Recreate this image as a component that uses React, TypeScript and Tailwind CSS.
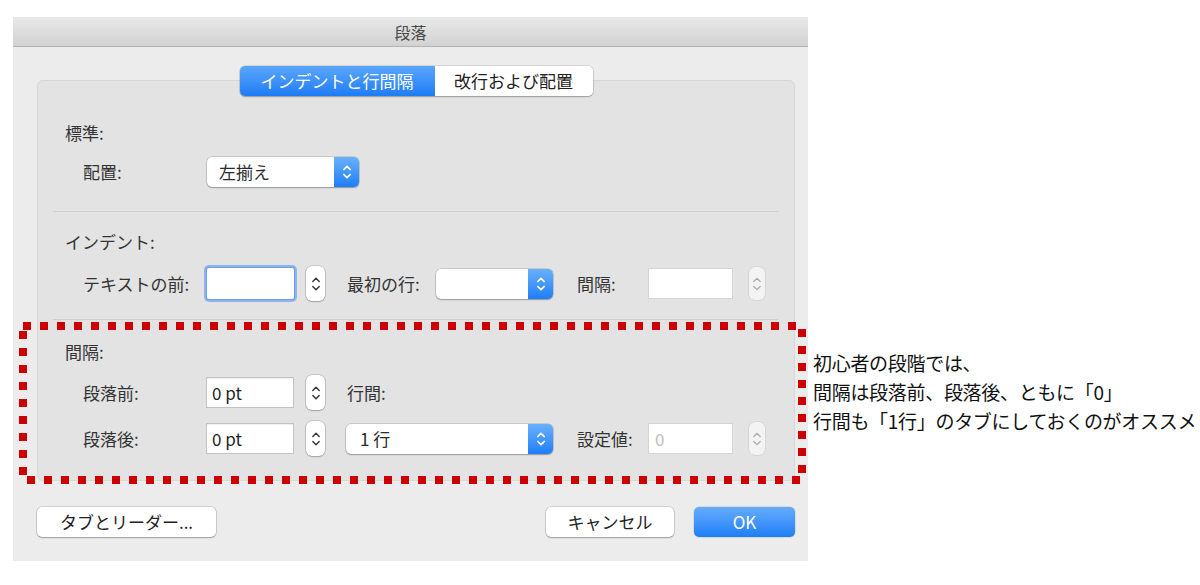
import React from "react";

function Chevrons({ color, w = 10, h = 16, sw = 1.6 }: { color: string; w?: number; h?: number; sw?: number }) {
  const cx = w / 2;
  return (
    <svg width={w} height={h} viewBox={`0 0 ${w} ${h}`} fill="none">
      <path d={`M${cx - 3.2} ${h / 2 - 2.5} L${cx} ${h / 2 - 5.7} L${cx + 3.2} ${h / 2 - 2.5}`} stroke={color} strokeWidth={sw} strokeLinecap="round" strokeLinejoin="round" />
      <path d={`M${cx - 3.2} ${h / 2 + 2.5} L${cx} ${h / 2 + 5.7} L${cx + 3.2} ${h / 2 + 2.5}`} stroke={color} strokeWidth={sw} strokeLinecap="round" strokeLinejoin="round" />
    </svg>
  );
}

function Select({ className, text, textClass }: { className: string; text: string; textClass: string }) {
  return (
    <div className={`h-[30px] flex rounded-[5px] bg-white shadow-[0_0_0_0.5px_rgba(0,0,0,0.22),0_1px_1.5px_rgba(0,0,0,0.25)] overflow-hidden ${className}`}>
      <div className={`flex-1 flex items-center text-[17px] text-[#2a2a2a] ${textClass}`}>{text}</div>
      <div className="w-[25px] flex items-center justify-center bg-linear-to-b from-[#68b0fb] to-[#1a7ef8]">
        <Chevrons color="#ffffff" w={12} h={20} sw={1.7} />
      </div>
    </div>
  );
}

function Stepper({ disabled }: { disabled?: boolean }) {
  if (disabled) {
    return (
      <div className="w-[16px] h-[33px] rounded-[6px] bg-[#f3f3f3] shadow-[0_0_0_0.5px_rgba(0,0,0,0.12)] flex items-center justify-center">
        <Chevrons color="#a8a8a8" w={10} h={24} sw={1.2} />
      </div>
    );
  }
  return (
    <div className="w-[19px] h-[35px] rounded-[6px] bg-white shadow-[0_0_0_0.5px_rgba(0,0,0,0.25),0_1px_1.5px_rgba(0,0,0,0.2)] flex items-center justify-center">
      <Chevrons color="#333333" w={10} h={24} sw={1.4} />
    </div>
  );
}

function Input({ className, text, focused, disabled, placeholder }: { className: string; text?: string; focused?: boolean; disabled?: boolean; placeholder?: string }) {
  const base = "h-[31px] bg-white flex items-center text-[17px] ";
  const look = focused
    ? "shadow-[0_0_0_1px_#6f9ee8,0_0_0_3px_#8db4ee] rounded-[2px]"
    : disabled
    ? "border border-[#d4d4d4]"
    : "border border-[#c3c3c3] shadow-[inset_0_1px_0_rgba(0,0,0,0.06)]";
  return (
    <div className={`${base}${look} ${className}`}>
      {text && <span className="pl-[5px] text-[#1f1f1f]">{text}</span>}
      {placeholder && <span className="pl-[6px] text-[#bdbdbd]">{placeholder}</span>}
    </div>
  );
}

function Label({ className, children }: { className: string; children: React.ReactNode }) {
  return <div className={`text-[17px] text-[#333] whitespace-nowrap ${className}`}>{children}</div>;
}

export default function App() {
  return (
    <div className="w-[1200px] h-[585px] bg-white relative flex items-start overflow-hidden font-['Noto_Sans_CJK_JP','Noto_Sans',sans-serif]">
      {/* Dialog */}
      <div className="ml-[13px] mt-[17px] w-[795px] h-[544px] bg-[#ececec] flex flex-col">
        <div className="h-[30px] flex items-center justify-center bg-linear-to-b from-[#e9e9e9] to-[#d2d2d2] border-b border-[#b3b3b3] text-[16px] text-[#4a4a4a]">
          段落
        </div>
        <div className="flex-1 flex flex-col pl-[24px] pr-[13px]">
          {/* Tabs */}
          <div className="mt-[19px] flex justify-center relative z-10">
            <div className="flex h-[30px] rounded-[5px] overflow-hidden shadow-[0_0_0_0.5px_rgba(0,0,0,0.2),0_1px_1.5px_rgba(0,0,0,0.25)]">
              <div className="w-[195px] flex items-center justify-center bg-linear-to-b from-[#5aa6fb] to-[#1b7cf6] text-white text-[17px]">
                インデントと行間隔
              </div>
              <div className="w-[158px] flex items-center justify-center bg-white text-[#222] text-[17px]">
                改行および配置
              </div>
            </div>
          </div>
          {/* Panel */}
          <div className="-mt-[16px] h-[401px] bg-[#e3e3e3] border border-[#d7d7d7] rounded-[6px] flex flex-col">
            <Label className="pt-[42px] pl-[27px] h-[62px] flex items-end leading-[20px]">標準:</Label>
            <div className="mt-[14px] h-[30px] flex items-center pl-[45px]">
              <Label className="w-[124px]">配置:</Label>
              <Select className="w-[152px]" text="左揃え" textClass="pl-[12px]" />
            </div>
            <div className="mt-[24px] h-px bg-[#cfcfcf] ml-[15px] mr-[16px]" />
            <Label className="mt-[20px] h-[20px] pl-[27px] leading-[20px]">インデント:</Label>
            <div className="mt-[13px] h-[37px] flex items-center pl-[45px]">
              <Label className="w-[124px]">テキストの前:</Label>
              <Input className="w-[87px]" focused />
              <div className="ml-[12px]"><Stepper /></div>
              <Label className="ml-[22px] w-[89px]">最初の行:</Label>
              <Select className="w-[117px]" text="" textClass="" />
              <Label className="ml-[24px] w-[71px]">間隔:</Label>
              <Input className="w-[85px]" disabled />
              <div className="ml-[16px]"><Stepper disabled /></div>
            </div>
            <div className="mt-[17px] h-px bg-[#cfcfcf] ml-[15px] mr-[16px]" />
            <Label className="mt-[22px] h-[20px] pl-[27px] leading-[20px]">間隔:</Label>
            <div className="mt-[15px] h-[31px] flex items-center pl-[45px]">
              <Label className="w-[123px]">段落前:</Label>
              <Input className="w-[88px]" text="0 pt" />
              <div className="ml-[12px]"><Stepper /></div>
              <Label className="ml-[22px]">行間:</Label>
            </div>
            <div className="mt-[15px] h-[31px] flex items-center pl-[45px]">
              <Label className="w-[123px]">段落後:</Label>
              <Input className="w-[88px]" text="0 pt" />
              <div className="ml-[12px]"><Stepper /></div>
              <Select className="ml-[21px] w-[207px]" text="1 行" textClass="pl-[14px]" />
              <Label className="ml-[24px] w-[71px]">設定値:</Label>
              <Input className="w-[85px]" disabled placeholder="0" />
              <div className="ml-[16px]"><Stepper disabled /></div>
            </div>
          </div>
          {/* Buttons */}
          <div className="mt-[26px] flex items-center justify-between">
            <div className="w-[179px] h-[30px] rounded-[5px] bg-white shadow-[0_0_0_0.5px_rgba(0,0,0,0.22),0_1px_1.5px_rgba(0,0,0,0.25)] flex items-center justify-center text-[17px] text-[#222]">
              タブとリーダー...
            </div>
            <div className="flex items-center gap-[20px]">
              <div className="w-[128px] h-[30px] rounded-[5px] bg-white shadow-[0_0_0_0.5px_rgba(0,0,0,0.22),0_1px_1.5px_rgba(0,0,0,0.25)] flex items-center justify-center text-[17px] text-[#222]">
                キャンセル
              </div>
              <div className="w-[101px] h-[30px] rounded-[5px] bg-linear-to-b from-[#64acfb] to-[#1b7ef8] shadow-[0_0_0_0.5px_rgba(0,0,0,0.15)] flex items-center justify-center text-[17px] text-white">
                OK
              </div>
            </div>
          </div>
        </div>
      </div>

      {/* Annotation text */}
      <div className="ml-[5px] mt-[348px] text-[19px] leading-[29px] tracking-[-0.3px] text-[#111] whitespace-nowrap">
        <div>初心者の段階では、</div>
        <div>間隔は段落前、段落後、ともに「0」</div>
        <div>行間も「1行」のタブにしておくのがオススメ</div>
      </div>

      {/* Red dotted highlight overlay */}
      <svg className="absolute left-[19px] top-[322px]" width="787" height="162" viewBox="0 0 787 162">
        <rect x="4" y="4" width="779" height="154" fill="none" stroke="#cc0000" strokeWidth="8" strokeDasharray="8 9" />
      </svg>
    </div>
  );
}
